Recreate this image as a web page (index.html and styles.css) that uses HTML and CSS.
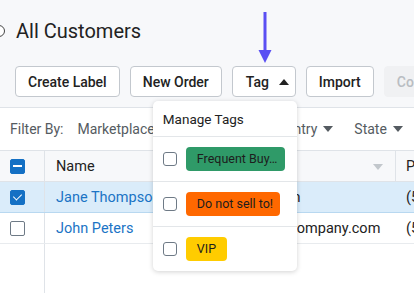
FILE: index.html
```html
<!DOCTYPE html>
<html lang="en">
<head>
    <meta charset="UTF-8">
    <meta name="viewport" content="width=device-width, initial-scale=1.0">
    <title>All Customers</title>
    <link rel="stylesheet" href="styles.css">
</head>
<body>
    <div class="page">
        <div class="top">
            <div class="title-row">
                <span class="radio"></span>
                <h1>All Customers</h1>
            </div>
            <div class="actions">
                <button class="btn">Create Label</button>
                <button class="btn">New Order</button>
                <div class="tag-wrap">
                    <button class="btn tag-btn">Tag <span class="caret-up"></span></button>
                    <div class="dropdown">
                        <div class="dropdown-head">Manage Tags</div>
                        <div class="dropdown-item">
                            <span class="check"></span>
                            <span class="pill pill-green">Frequent Buy&hellip;</span>
                        </div>
                        <div class="dropdown-item">
                            <span class="check"></span>
                            <span class="pill pill-orange">Do not sell to!</span>
                        </div>
                        <div class="dropdown-item last">
                            <span class="check"></span>
                            <span class="pill pill-yellow">VIP</span>
                        </div>
                    </div>
                </div>
                <button class="btn">Import</button>
                <button class="btn disabled">Columns</button>
            </div>
        </div>

        <div class="filters">
            <span class="filter-label">Filter By:</span>
            <span class="filter">Marketplace <span class="caret"></span></span>
            <span class="filter">Status <span class="caret"></span></span>
            <span class="filter">Country <span class="caret"></span></span>
            <span class="filter">State <span class="caret"></span></span>
        </div>

        <div class="table">
            <div class="row head">
                <div class="cell c-check"><span class="box indeterminate"></span></div>
                <div class="cell c-name">Name</div>
                <div class="cell c-email">Email <span class="sort"></span></div>
                <div class="cell c-phone">Phone</div>
            </div>
            <div class="row selected">
                <div class="cell c-check"><span class="box checked"></span></div>
                <div class="cell c-name link">Jane Thompson</div>
                <div class="cell c-email">jane.thompson</div>
                <div class="cell c-phone">(555) 201-3344</div>
            </div>
            <div class="row">
                <div class="cell c-check"><span class="box"></span></div>
                <div class="cell c-name link">John Peters</div>
                <div class="cell c-email">john.peters@company.com</div>
                <div class="cell c-phone">(555) 870-1122</div>
            </div>
            <div class="row filler">
                <div class="cell c-check"></div>
            </div>
        </div>

        <!-- pointer arrow drawn over the toolbar -->
        <svg class="pointer" width="16" height="52" viewBox="0 0 16 52">
            <line x1="8" y1="0" x2="8" y2="42" stroke="#5a4ff3" stroke-width="3"/>
            <polygon points="1.5,38 14.5,38 8,51" fill="#5a4ff3"/>
        </svg>
    </div>
</body>
</html>
```

FILE: styles.css
```css
* {
    box-sizing: border-box;
}
body {
    margin: 0;
    font-family: Roboto, "Liberation Sans", sans-serif;
    color: #222;
    background-color: #fff;
}
.page {
    position: relative;
    width: 414px;
    height: 293px;
    overflow: hidden;
    display: flex;
    flex-direction: column;
}
.top {
    background-color: #f7f8fa;
    border-bottom: 1px solid #dfe3e8;
    height: 108px;
    flex-shrink: 0;
}
.title-row {
    display: flex;
    align-items: center;
    height: 48px;
    padding-top: 14px;
}
.radio {
    width: 12px;
    height: 12px;
    border: 1.5px solid #444;
    border-radius: 50%;
    margin-left: -7px;
    margin-right: 11px;
    background: #fff;
}
h1 {
    margin: 0;
    font-size: 20px;
    font-weight: 400;
    color: #222;
}
.actions {
    display: flex;
    align-items: center;
    padding-left: 15px;
    margin-top: 18px;
    gap: 10px;
}
.btn {
    height: 31px;
    padding: 0 12px;
    border: 1px solid #c3c8ce;
    border-radius: 4px;
    background: #fff;
    font-family: inherit;
    font-size: 14px;
    font-weight: 500;
    color: #222;
    white-space: nowrap;
    flex-shrink: 0;
}
.btn.disabled {
    background: #f0f1f3;
    border-color: #f0f1f3;
    color: #b9bdc2;
}
.tag-wrap {
    position: relative;
    flex-shrink: 0;
}
.tag-btn {
    width: 64px;
    display: flex;
    align-items: center;
    gap: 10px;
    padding-left: 13px;
}
.caret-up {
    width: 0;
    height: 0;
    border-left: 5px solid transparent;
    border-right: 5px solid transparent;
    border-bottom: 6px solid #222;
}
.dropdown {
    position: absolute;
    top: 35px;
    right: -1px;
    width: 144px;
    background: #fff;
    border-radius: 5px;
    box-shadow: 0 1px 5px rgba(0, 0, 0, 0.18);
    z-index: 10;
}
.dropdown-head {
    height: 36px;
    padding: 10px 0 0 10px;
    font-size: 13.5px;
    border-bottom: 1px solid #e3e6e9;
}
.dropdown-item {
    display: flex;
    align-items: center;
    height: 45px;
    padding-left: 10px;
    border-bottom: 1px solid #e3e6e9;
}
.dropdown-item.last {
    border-bottom: none;
    height: 44px;
}
.check {
    width: 14px;
    height: 14px;
    border: 1.5px solid #6e7a86;
    border-radius: 3px;
    margin-right: 9px;
    flex-shrink: 0;
}
.pill {
    height: 24px;
    line-height: 24px;
    padding: 0 11px;
    border-radius: 4px;
    font-size: 12.5px;
    color: #1d1d1d;
    white-space: nowrap;
}
.pill-green {
    background: #2f9a68;
    width: 99px;
}
.pill-orange {
    background: #ff6800;
    width: 94px;
}
.pill-yellow {
    background: #ffcc00;
}
.filters {
    display: flex;
    align-items: center;
    height: 42px;
    padding-left: 10px;
    font-size: 14px;
    color: #555b61;
    white-space: nowrap;
    flex-shrink: 0;
}
.filter-label {
    margin-right: 14px;
}
.filter {
    display: flex;
    align-items: center;
    gap: 6px;
    margin-right: 21px;
}
.caret {
    width: 0;
    height: 0;
    border-left: 5px solid transparent;
    border-right: 5px solid transparent;
    border-top: 6px solid #555b61;
}
.table {
    flex: 1;
    display: flex;
    flex-direction: column;
    font-size: 14.5px;
}
.row {
    display: flex;
    height: 31px;
    border-bottom: 1px solid #e8ebee;
    flex-shrink: 0;
}
.row.head {
    background: #f7f8fa;
    border-top: 1px solid #dfe3e8;
    border-bottom: 1px solid #dfe3e8;
    height: 32px;
}
.row.selected {
    background: #daecfa;
    border-bottom-color: #b8d8f0;
}
.row.filler {
    flex: 1;
    border-bottom: none;
}
.cell {
    display: flex;
    align-items: center;
    white-space: nowrap;
}
.c-check {
    width: 45px;
    flex-shrink: 0;
    padding-left: 10px;
    border-right: 1px solid #dfe3e8;
}
.c-name {
    width: 151px;
    flex-shrink: 0;
    padding-left: 11px;
}
.c-email {
    width: 200px;
    flex-shrink: 0;
    padding-left: 8px;
    position: relative;
}
.head .c-email {
    border-right: 1px solid #dfe3e8;
}
.c-phone {
    padding-left: 10px;
}
.link {
    color: #1b74c5;
}
.sort {
    position: absolute;
    right: 12px;
    top: 13px;
    width: 0;
    height: 0;
    border-left: 5px solid transparent;
    border-right: 5px solid transparent;
    border-top: 6px solid #c2c7cc;
}
.box {
    width: 15px;
    height: 15px;
    border: 1.5px solid #6e7a86;
    border-radius: 2px;
    background: #fff;
    position: relative;
}
.box.indeterminate,
.box.checked {
    background: #1470c4;
    border-color: #1470c4;
}
.box.indeterminate::after {
    content: "";
    position: absolute;
    left: 2px;
    right: 2px;
    top: 5px;
    height: 2px;
    background: #fff;
}
.box.checked::after {
    content: "";
    position: absolute;
    left: 3.5px;
    top: 1px;
    width: 4px;
    height: 7px;
    border-right: 1.5px solid #fff;
    border-bottom: 1.5px solid #fff;
    transform: rotate(45deg);
}
.pointer {
    position: absolute;
    left: 257px;
    top: 12px;
}
```
